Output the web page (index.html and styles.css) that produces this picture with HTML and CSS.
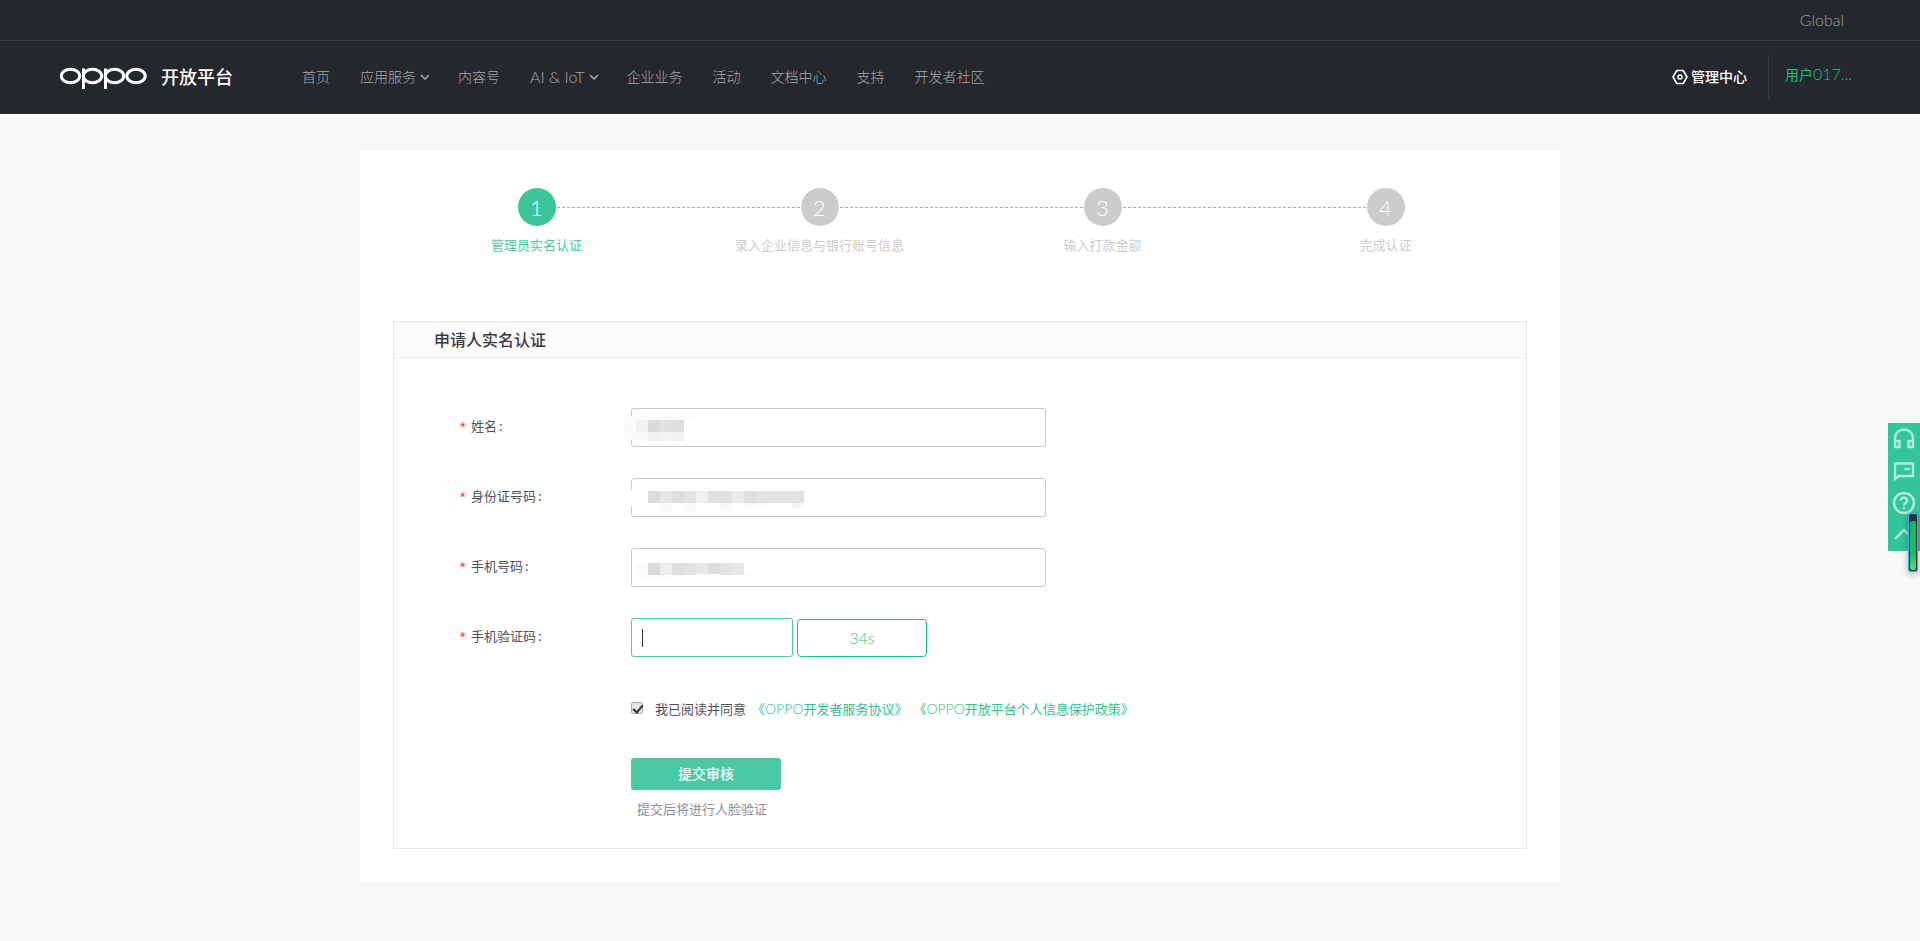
FILE: index.html
```html
<!DOCTYPE html>
<html lang="zh-CN">
<head>
<meta charset="utf-8">
<title>OPPO 开放平台</title>
<link rel="stylesheet" href="styles.css">
</head>
<body>
<header class="header">
  <div class="topbar"><a class="global" href="#">Global</a></div>
  <div class="mainbar">
    <a class="brand" href="#" aria-label="OPPO 开放平台">
      <svg class="logo" viewBox="0 0 87 24" width="87" height="24" fill="none" stroke="#fff" stroke-width="3">
        <ellipse cx="10.500" cy="10" rx="9.200" ry="6.800"/>
        <ellipse cx="32.500" cy="10" rx="9.200" ry="6.800"/>
        <ellipse cx="54.500" cy="10" rx="9.200" ry="6.800"/>
        <ellipse cx="76" cy="10" rx="9.200" ry="6.800"/>
        <path d="M23.500 2.500V23M45.500 2.500V23"/>
      </svg>
      <span class="brand-name">开放平台</span>
    </a>
    <nav class="nav">
      <a href="#">首页</a>
      <a class="drop" href="#">应用服务<svg class="chev" viewBox="0 0 10 6" width="10" height="6"><path d="M1 1l4 4 4-4"/></svg></a>
      <a href="#">内容号</a>
      <a class="drop" href="#"><span class="latin">AI &amp; IoT</span><svg class="chev" viewBox="0 0 10 6" width="10" height="6"><path d="M1 1l4 4 4-4"/></svg></a>
      <a href="#">企业业务</a>
      <a href="#">活动</a>
      <a href="#">文档中心</a>
      <a href="#">支持</a>
      <a href="#">开发者社区</a>
    </nav>
    <a class="console" href="#">
      <svg viewBox="0 0 16 16" width="16" height="16" fill="none" stroke="#fff" stroke-width="1.600"><path d="M4.800 1.500h6.400L15 8l-3.800 6.500H4.800L1 8z" stroke-linejoin="round"/><circle cx="8" cy="8" r="2"/></svg>
      <span>管理中心</span>
    </a>
    <a class="user" href="#">用户<span class="latin">017...</span></a>
  </div>
</header>

<main class="card">
  <ol class="steps">
    <li class="step active"><span class="num">1</span><span class="step-name">管理员实名认证</span></li>
    <li class="step"><span class="num">2</span><span class="step-name">录入企业信息与银行账号信息</span></li>
    <li class="step"><span class="num">3</span><span class="step-name">输入打款金额</span></li>
    <li class="step"><span class="num">4</span><span class="step-name">完成认证</span></li>
  </ol>
  <section class="panel">
    <h2 class="panel-title">申请人实名认证</h2>
    <form class="form">
      <div class="row">
        <label for="name"><i>*</i>姓名<b>:</b></label>
        <div class="field"><input id="name" type="text">
          <svg class="mask" viewBox="0 0 200 40" width="200" height="40">
            <path fill="#fafafa" d="M-2 8h62q6 0 8 4H53v20H-2q-5 0-5-6V13q0-5 5-5z"/>
            <path fill="#f1f1f1" d="M5 12h12v12H5z"/><path fill="#dbdbdb" d="M17 12h12v12H17z"/><path fill="#e2e2e2" d="M29 12h12v12H29z"/><path fill="#dddfdf" d="M41 12h12v12H41z"/><path fill="#f1f1f1" d="M17 24h12v9H17z"/><path fill="#f4f4f4" d="M29 24h12v9H29z"/><path fill="#f0f2f1" d="M41 24h12v9H41z"/>
          </svg>
        </div>
      </div>
      <div class="row">
        <label for="idno"><i>*</i>身份证号码<b>:</b></label>
        <div class="field"><input id="idno" type="text">
          <svg class="mask" viewBox="0 0 200 40" width="200" height="40">
            <path fill="#fdfdfd" d="M5 8h180v16l-60 6-40 4H10Q-2 31-2 20 0 8 5 8z"/>
            <path fill="#dbdbdb" d="M17 13h12v12H17z"/><path fill="#e6e6e6" d="M29 13h12v12H29z"/><path fill="#dedede" d="M41 13h12v12H41z"/><path fill="#e3e3e3" d="M53 13h12v12H53z"/><path fill="#f0f0f0" d="M65 13h12v12H65z"/><path fill="#e1e1e1" d="M77 13h24v12H77z"/><path fill="#ececec" d="M101 13h12v12h-12z"/><path fill="#dee0e1" d="M113 13h12v12h-12z"/><path fill="#e3e3e2" d="M125 13h24v12h-24z"/><path fill="#e4e2e3" d="M149 13h24v12h-24z"/><path fill="#f9f9f9" d="M29 25h12v8H29zM53 25h12v8H53zM89 25h12v8H89zM113 25h24v4h-24z"/><path fill="#f5f5f5" d="M161 25h12v5h-12z"/>
          </svg>
        </div>
      </div>
      <div class="row">
        <label for="phone"><i>*</i>手机号码<b>:</b></label>
        <div class="field"><input id="phone" type="text">
          <svg class="mask" viewBox="0 0 200 40" width="200" height="40">
            <path fill="#fbfbfb" d="M8 14h105v12l14 1q0 3-24 0H60L20 32Q4 32 4 22q0-8 4-8z"/>
            <path fill="#dbdada" d="M17 15h12v12H17z"/><path fill="#eceeee" d="M29 15h12v12H29z"/><path fill="#dedede" d="M41 15h12v12H41z"/><path fill="#e1e2e2" d="M53 15h12v12H53z"/><path fill="#e7e7e7" d="M65 15h12v11H65zM101 15h12v12h-12z"/><path fill="#dddddd" d="M77 15h12v11H77z"/><path fill="#e3e3e3" d="M89 15h12v12H89z"/>
          </svg>
        </div>
      </div>
      <div class="row">
        <label for="code"><i>*</i>手机验证码<b>:</b></label>
        <div class="field code-field"><input id="code" class="code" type="text"><span class="caret"></span><button type="button" class="resend">34s</button></div>
      </div>
      <div class="agree">
        <span class="check"><input id="agree" type="checkbox" checked></span>
        <label for="agree">我已阅读并同意</label>
        <a href="#">《<span class="latin">OPPO</span>开发者服务协议》</a>
        <a href="#">《<span class="latin">OPPO</span>开放平台个人信息保护政策》</a>
      </div>
      <button type="submit" class="submit">提交审核</button>
      <p class="note">提交后将进行人脸验证</p>
    </form>
  </section>
</main>

<aside class="tools">
  <button type="button" aria-label="客服"><svg viewBox="0 0 24 24"><path d="M3 20V11a9 8.500 0 0 1 18 0v9h-4.500v-6H21M3 14h4.500v6H2"/></svg></button>
  <button type="button" aria-label="反馈"><svg viewBox="0 0 24 24"><path d="M3 20V4.500h18V17H7zM12.500 10H18"/></svg></button>
  <button type="button" aria-label="帮助"><svg viewBox="0 0 24 24"><circle cx="12" cy="12" r="10"/><path d="M9 9.500a3 3 0 1 1 4.500 2.600q-1.500.9-1.500 2.400M12 16.200v2"/></svg></button>
  <button type="button" aria-label="返回顶部"><svg viewBox="0 0 24 24"><path d="M3 16l9-9 9 9"/></svg></button>
</aside>
<div class="meter"><div class="meter-fill"></div></div>
</body>
</html>
```

FILE: styles.css
```css
* { box-sizing: border-box; }
body {
  margin: 0;
  min-height: 100vh;
  background: #f8f8f8;
  color: #50505a;
  font: 400 13px/20px Lato, "Noto Sans CJK SC", sans-serif;
}
a { color: inherit; text-decoration: none; }
input, button { font: inherit; }
.header { background: #24272b; color: #a0a1a3; }
.topbar {
  display: flex;
  justify-content: flex-end;
  align-items: center;
  height: 41px;
  padding: 0 76px;
  border-bottom: 1px solid #3c3d3f;
}
.global { font-size: 16px; font-weight: 300; }
.mainbar { display: flex; align-items: center; height: 73px; padding: 0 68px 2px 60px; }
.brand { display: flex; align-items: center; gap: 14px; color: #fff; }
.logo { display: block; margin-top: 2px; }
.brand-name { font-size: 18px; font-weight: 500; line-height: 24px; }
.nav { display: flex; gap: 30px; margin-left: 69px; font-size: 14px; font-weight: 300; color: #a8a9ab; }
.nav a { display: flex; align-items: center; white-space: nowrap; }
.nav .drop { margin-right: -2px; }
.nav .latin { font-size: 16px; }
.chev { margin-left: 4px; fill: none; stroke: currentColor; stroke-width: 1.500; }
.console {
  display: flex;
  align-items: center;
  gap: 3px;
  margin-left: auto;
  padding-right: 21px;
  color: #fff;
  font-size: 14px;
  font-weight: 500;
}
.user { padding: 9px 0 13px 16px; border-left: 1px solid #3c3d3f; color: #20bf85; font-size: 14px; }
.user .latin { font-size: 16px; font-weight: 300; }

.card { width: 1200px; max-width: 100%; margin: 37px auto 60px; padding: 37px 33px 33px; background: #fff; }
.steps { display: flex; margin: 0; padding: 0 0 0 2px; list-style: none; }
.step {
  position: relative;
  flex: 1;
  display: flex;
  flex-direction: column;
  align-items: center;
  gap: 9px;
  color: #ccc;
}
.step + .step::before {
  content: "";
  position: absolute;
  top: 19px;
  right: calc(50% + 20px);
  left: calc(-50% + 20px);
  border-top: 1px dashed #aaa;
}
.num {
  width: 38px;
  height: 38px;
  border-radius: 50%;
  background: #ccc;
  color: #fff;
  font-size: 22px;
  font-weight: 300;
  line-height: 40px;
  text-align: center;
}
.active { color: #4ac9a2; }
.active .num { background: #3bc59a; }
.panel { margin-top: 66px; border: 1px solid #e8e9eb; }
.panel-title {
  margin: 0;
  padding: 0 40px;
  border-bottom: 1px solid #e8e9eb;
  background: #fbfbfb;
  color: #3a3a44;
  font-size: 16px;
  font-weight: 500;
  line-height: 35px;
}
.form { padding: 50px 65px 29px; }
.row { display: flex; height: 39px; margin-bottom: 31px; }
.row label { display: flex; width: 172px; line-height: 36px; }
.row i { width: 12px; color: #ff4d4f; font: 400 16px/40px "Noto Sans CJK SC", sans-serif; }
.row b { margin-left: 2px; font-size: 14px; font-weight: 400; }
.field { position: relative; width: 415px; }
.field input { width: 100%; height: 39px; padding: 0 10px; border: 1px solid #c8c8c8; border-radius: 3px; outline: 0; background: #fff; }
.mask { position: absolute; top: 0; left: 0; overflow: visible; }
.code-field { display: flex; align-items: flex-end; gap: 4px; }
.field .code { width: 162px; border-color: #4ac9a2; }
.caret { position: absolute; top: 11px; left: 11px; width: 1px; height: 18px; background: #333; }
.resend { width: 130px; height: 38px; border: 1px solid #20bf8e; border-radius: 4px; background: #fff; color: #30c092; font-size: 16px; font-weight: 300; }
.agree { display: flex; align-items: center; gap: 8px; margin: 42px 0 39px 172px; white-space: nowrap; }
.agree a { margin-left: -2px; color: #30c092; }
.agree .latin { font-size: 14px; font-weight: 300; }
.check { position: relative; width: 16px; height: 16px; }
.check input {
  appearance: none;
  display: block;
  width: 12px;
  height: 12px;
  margin: 1px 0 0;
  border: 1px solid #aaa;
  border-radius: 2px;
  background: #e6e6e6;
}
.check::after {
  content: "";
  position: absolute;
  top: 2px;
  left: 4px;
  width: 4px;
  height: 8px;
  border: solid #333;
  border-width: 0 2px 2px 0;
  transform: rotate(40deg);
  pointer-events: none;
}
.submit { display: block; width: 150px; height: 32px; margin-left: 172px; border: 0; border-radius: 3px; background: #4ac9a2; color: #fff; font-size: 14px; font-weight: 500; }
.note { margin: 9px 0 0 178px; color: #909090; }

.tools { position: fixed; top: 423px; right: 0; width: 32px; background: #32c49b; }
.tools button { display: block; width: 32px; height: 32px; padding: 4px; border: 0; background: none; }
.tools svg { display: block; width: 24px; height: 24px; fill: none; stroke: #b5e9d8; stroke-width: 2.400; }
.meter {
  position: fixed;
  top: 513px;
  right: 2px;
  width: 10px;
  height: 59px;
  padding-top: 6px;
  border: 1px solid #4aa8f0;
  border-radius: 3px;
  background: #2c3040;
  box-shadow: 0 2px 6px rgba(0, 0, 0, .3);
}
.meter-fill { height: 100%; border: 1px solid #23303c; border-radius: 3px; background: linear-gradient(#14b866, #15c060 70%, #5ae070); }
```
